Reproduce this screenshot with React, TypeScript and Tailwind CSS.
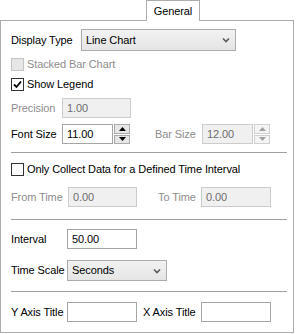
import React from "react";

const font = { fontFamily: '"Liberation Sans", Arial, sans-serif' };

function Chevron() {
  return (
    <svg width="8" height="6" viewBox="0 0 8 6" className="shrink-0">
      <path d="M1 1.5 L4 4.5 L7 1.5" fill="none" stroke="#5a5a5a" strokeWidth="1.6" />
    </svg>
  );
}

function Select({ value, w }: { value: string; w: string }) {
  return (
    <div
      className={`${w} h-full flex items-center justify-between pl-[4px] pr-[5px] border border-[#acacac] bg-gradient-to-b from-[#f2f2f2] to-[#e5e5e5] text-black`}
    >
      <span>{value}</span>
      <Chevron />
    </div>
  );
}

function Input({ value, w, disabled }: { value?: string; w: string; disabled?: boolean }) {
  return (
    <div
      className={`${w} h-full flex items-center pl-[4px] border ${
        disabled ? "border-[#cccccc] bg-[#f0f0f0] text-[#6d6d6d]" : "border-[#a5a5a5] bg-white text-black"
      }`}
    >
      {value}
    </div>
  );
}

function Tri({ up, disabled }: { up?: boolean; disabled?: boolean }) {
  return (
    <svg width="7" height="4" viewBox="0 0 7 4">
      <path d={up ? "M0 4 L3.5 0 L7 4 Z" : "M0 0 L3.5 4 L7 0 Z"} fill={disabled ? "#a0a0a0" : "#000"} />
    </svg>
  );
}

function Spinner({ disabled }: { disabled?: boolean }) {
  const btn = `flex-1 flex items-center justify-center border ${
    disabled ? "border-[#d0d0d0] bg-[#f4f4f4]" : "border-[#acacac] bg-[#e6e6e6]"
  }`;
  return (
    <div className="w-[17px] h-full flex flex-col gap-[1px] pl-[1px]">
      <div className={btn}>
        <Tri up disabled={disabled} />
      </div>
      <div className={btn}>
        <Tri disabled={disabled} />
      </div>
    </div>
  );
}

function Checkbox({ checked, disabled }: { checked?: boolean; disabled?: boolean }) {
  return (
    <div
      className={`w-[13px] h-[13px] shrink-0 border flex items-center justify-center ${
        disabled ? "border-[#c4c4c4] bg-[#e6e6e6]" : "border-[#333333] bg-white"
      }`}
    >
      {checked && (
        <svg width="9" height="9" viewBox="0 0 9 9">
          <path d="M1 4.5 L3.5 7 L8 1.5" fill="none" stroke="#000" strokeWidth="1.8" />
        </svg>
      )}
    </div>
  );
}

function Sep({ mt }: { mt: string }) {
  return <div className={`${mt} w-[276px] h-px bg-[#a0a0a0]`} />;
}

export default function App() {
  return (
    <div
      className="w-[296px] h-[334px] bg-white text-[11px] tracking-[-0.1px] text-black leading-none relative"
      style={font}
    >
      <div className="h-[20px] relative">
        <div className="absolute left-[146px] top-0 w-[54px] h-[21px] border border-b-0 border-[#acacac] bg-white z-10 flex items-center justify-center">
          General
        </div>
      </div>
      <div className="w-[294px] h-[313px] border border-[#acacac] flex flex-col pl-[10px]">
        <div className="mt-[8px] h-[22px] flex items-center">
          <div className="w-[70px]">Display Type</div>
          <Select value="Line Chart" w="w-[155px]" />
        </div>
        <div className="mt-[7px] h-[13px] flex items-center gap-[3px]">
          <Checkbox disabled />
          <span className="text-[#8d8d8d]">Stacked Bar Chart</span>
        </div>
        <div className="mt-[7px] h-[13px] flex items-center gap-[3px]">
          <Checkbox checked />
          <span>Show Legend</span>
        </div>
        <div className="mt-[7px] h-[20px] flex items-center">
          <div className="w-[51px] text-[#8d8d8d]">Precision</div>
          <Input value="1.00" w="w-[69px]" disabled />
        </div>
        <div className="mt-[6px] h-[20px] flex items-center">
          <div className="w-[51px]">Font Size</div>
          <Input value="11.00" w="w-[51px]" />
          <Spinner />
          <div className="w-[47px] ml-[25px] text-[#8d8d8d]">Bar Size</div>
          <Input value="12.00" w="w-[51px]" disabled />
          <Spinner disabled />
        </div>
        <Sep mt="mt-[8px]" />
        <div className="mt-[10px] h-[13px] flex items-center gap-[3px]">
          <Checkbox />
          <span>Only Collect Data for a Defined Time Interval</span>
        </div>
        <div className="mt-[11px] h-[20px] flex items-center">
          <div className="w-[57px] text-[#8d8d8d]">From Time</div>
          <Input value="0.00" w="w-[69px]" disabled />
          <div className="ml-[21px] w-[43px] text-[#8d8d8d]">To Time</div>
          <Input value="0.00" w="w-[70px]" disabled />
        </div>
        <Sep mt="mt-[12px]" />
        <div className="mt-[9px] h-[20px] flex items-center">
          <div className="w-[56px]">Interval</div>
          <Input value="50.00" w="w-[70px]" />
        </div>
        <div className="mt-[11px] h-[21px] flex items-center">
          <div className="w-[56px]">Time Scale</div>
          <Select value="Seconds" w="w-[100px]" />
        </div>
        <Sep mt="mt-[10px]" />
        <div className="mt-[10px] h-[20px] flex items-center">
          <div className="w-[56px]">Y Axis Title</div>
          <Input w="w-[70px]" />
          <div className="ml-[6px] w-[58px]">X Axis Title</div>
          <Input w="w-[70px]" />
        </div>
      </div>
    </div>
  );
}
